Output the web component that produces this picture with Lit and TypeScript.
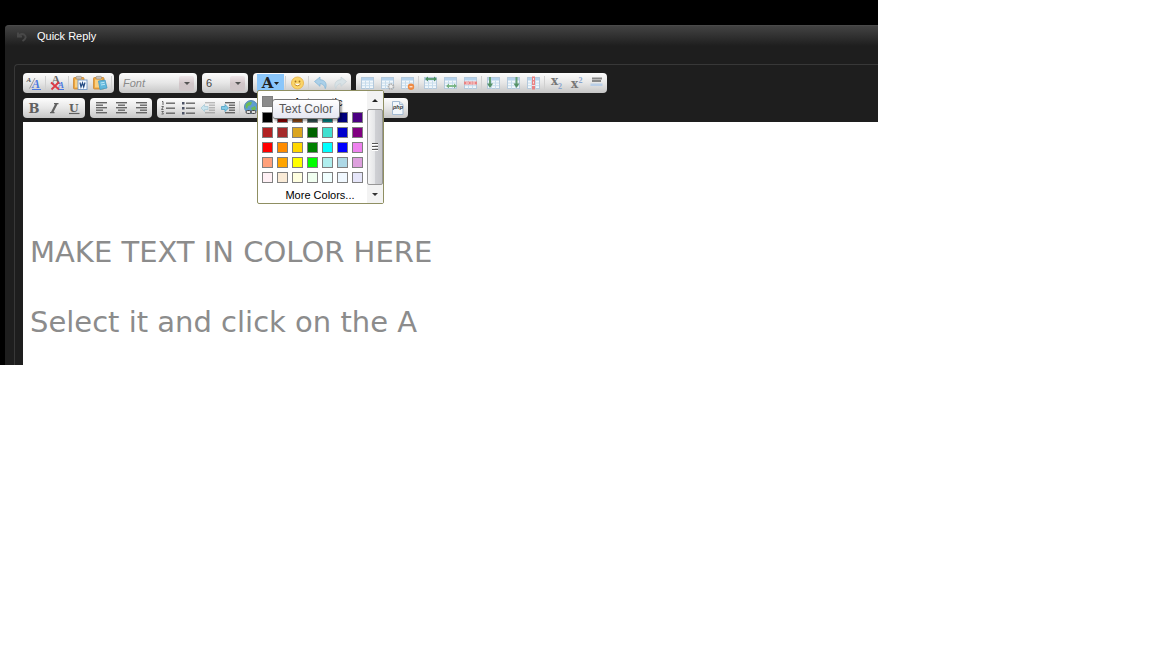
import { LitElement, html, css, svg, TemplateResult } from "lit";
import { customElement, property, state } from "lit/decorators.js";

const lines = (rows: number[][]) =>
  svg`${rows.map(([x, y, w]) => svg`<rect x=${x} y=${y} width=${w} height="1.4" fill="#666"/>`)}`;

const grid = svg`
  <rect x="2.5" y="2.5" width="12" height="11" fill="#f2f7fb" stroke="#b4c9dc"/>
  <path d="M3 3h11v2.500H3z" fill="#b5d2ec"/>
  <path d="M3 8h11M3 10.700h11M6.500 5.500v8M10.500 5.500v8" stroke="#c6dcec" fill="none"/>`;

const clipboard = svg`
  <rect x="1.500" y="2.500" width="10.500" height="11.500" rx="1" fill="#eda53c" stroke="#c98532" stroke-width=".8"/>
  <path d="M3 4.500h7v8H3z" fill="#f8cf83"/>
  <rect x="4" y="1.300" width="5.500" height="2.800" rx="1" fill="#c9c2ba" stroke="#8d857c" stroke-width=".6"/>`;

const glyph = (x: number, y: number, size: number, fill: string, text: string, style = "normal", family = "Liberation Serif") =>
  svg`<text x=${x} y=${y} font-size=${size} fill=${fill} font-weight="bold" font-style=${style} font-family=${family + ", serif"}>${text}</text>`;

const icons: Record<string, TemplateResult> = {
  style: svg`${glyph(0.5, 7, 7, "#555", "A", "italic")}<path d="M3.500 13.500L9 3" stroke="#888" stroke-width=".8"/>${glyph(6, 12.500, 12, "#4a78e0", "A", "italic")}<path d="M6 14.500h9" stroke="#4a78e0"/>`,
  unstyle: svg`${glyph(2.500, 9, 12, "#666", "A")}${glyph(9, 12.500, 9, "#4a78e0", "A", "italic")}<path d="M9 14.500h6" stroke="#4a78e0"/><path d="M2 7.500l8 7M10 7l-7.500 7.500" stroke="#dd3b45" stroke-width="1.800"/>`,
  pasteWord: svg`${clipboard}<rect x="6" y="5" width="9" height="9.500" fill="#f4f9ff" stroke="#7297c5" stroke-width=".9"/><path d="M8 7.500l1 4.500 1.500-4 1.200 4L13 7.500" fill="none" stroke="#234a83" stroke-width="1.200"/>`,
  paste: svg`${clipboard}<path d="M6.500 6l6.500-1 2 8-7 1.500z" fill="#62b8dc" stroke="#4598c0" stroke-width=".8"/><path d="M8.500 8l4-.7M9 10l4-.7" stroke="#bce7f6"/>`,
  smile: svg`<circle cx="8.500" cy="8" r="6" fill="#fbd567" stroke="#eab955"/><circle cx="6.500" cy="6.500" r=".9" fill="#a67420"/><circle cx="10.500" cy="6.500" r=".9" fill="#a67420"/><path d="M5.300 8.800q3.200 4 6.400 0" fill="#fff" stroke="#c08a35"/>`,
  undo: svg`<path d="M2.500 6.500L8 2v2.700c5 .2 7.500 3.800 5.300 9C12.500 10.300 11 8.700 8 8.700v2.600z" fill="#abd0e9" stroke="#80b3d6" stroke-width=".7"/>`,
  redo: svg`<path d="M14.500 6.500L9 2v2.700c-5 .2-7.500 3.800-5.300 9C4.500 10.300 6 8.700 9 8.700v2.600z" fill="#d8e2e6" stroke="#c3d0d6" stroke-width=".7"/>`,
  table: grid,
  tableProps: svg`${grid}<circle cx="12" cy="11.500" r="2.500" fill="#eee" stroke="#aaa" stroke-width="1.700" stroke-dasharray="1.500 .7"/>`,
  tableDelete: svg`${grid}<circle cx="12" cy="11.800" r="3.200" fill="#ee8b45"/><path d="M10.500 11.800h3" stroke="#fff"/>`,
  rowAbove: svg`${grid}<path d="M5 4h8" stroke="#63a077" stroke-width="2"/><path d="M6 1.500L3 4l3 2.500zM12 1.500l3 2.500-3 2.500z" fill="#4f9165"/>`,
  rowBelow: svg`${grid}<path d="M5 11h8" stroke="#82bd8e" stroke-width="2"/><path d="M7 8.500L4 11l3 2.500zM12 8.500l3 2.500-3 2.500z" fill="#76b081"/>`,
  rowDelete: svg`${grid}<path d="M2 8h13" stroke="#e98383" stroke-width="3"/><path d="M4 8h3M8.500 8h2M12 6.500v3" stroke="#fbe0e0"/>`,
  colLeft: svg`${grid}<path d="M5 2v8" stroke="#66a176" stroke-width="2"/><path d="M2 8.500h6L5 13z" fill="#559168"/>`,
  colRight: svg`${grid}<path d="M11.500 2v8" stroke="#66a176" stroke-width="2"/><path d="M8.500 8.500h6l-3 4.500z" fill="#559168"/>`,
  colDelete: svg`${grid}<path d="M8.500 1.500v13" stroke="#e98383" stroke-width="3"/><path d="M8.500 3v2M8.500 6.500v2M7 10.500h3" stroke="#fbe0e0"/>`,
  sub: svg`${glyph(3, 10, 12, "#777", "x", "normal", "DejaVu Serif")}${glyph(10, 13.500, 8, "#8ba6cf", "2")}`,
  sup: svg`${glyph(3, 13, 12, "#777", "x", "normal", "DejaVu Serif")}${glyph(10.500, 7.500, 8, "#8ba6cf", "2")}`,
  rule: svg`<path d="M4 3.500h10M4 6h9" stroke="#888" stroke-width="1.800"/><path d="M2.500 8.500h12V11h-12z" fill="#b9cee7"/>`,
  bold: glyph(2.500, 13, 13, "#606060", "B", "normal", "DejaVu Serif"),
  italic: svg`<path d="M8 3h4.500v1.200h-1L7.500 12h1v1.200H4V12h1L9 4.200H8z" fill="#606060"/>`,
  underline: svg`${glyph(3, 11.500, 11, "#606060", "U", "normal", "DejaVu Serif")}<path d="M3 13.500h10.500" stroke="#606060" stroke-width="1.200"/>`,
  left: lines([[3, 2, 11], [3, 4.5, 7], [3, 7, 11], [3, 9.500, 7], [3, 12, 11]]),
  center: lines([[3, 2, 11], [5, 4.5, 7], [3, 7, 11], [5, 9.500, 7], [3, 12, 11]]),
  right: lines([[3, 2, 11], [7, 4.5, 7], [3, 7, 11], [7, 9.500, 7], [3, 12, 11]]),
  ordered: svg`${lines([[6, 2.500, 9], [6, 7.500, 9], [6, 12.500, 9]])}<path d="M2 1.500h1V5M1.500 6.500h2l-2 3h2M1.500 11.500h2l-1 1.200 1 1.300h-2" fill="none" stroke="#666"/>`,
  bullets: svg`${lines([[6, 2.500, 9], [6, 7.500, 9], [6, 12.500, 9]])}<path d="M2 2h2.500v2.500H2zM2 7h2.500v2.500H2zM2 12h2.500v2.500H2z" fill="#4c5365"/>`,
  outdent: svg`<g opacity=".4">${lines([[5, 2, 10], [9, 4.500, 6], [9, 7, 6], [9, 9.500, 6], [5, 12, 10]])}</g><path d="M1 8l3.500-3.500v2H8v3H4.500v2z" fill="#c9e4ee" stroke="#a2c7d6" stroke-width=".7"/>`,
  indent: svg`${lines([[5, 2, 10], [9, 4.500, 6], [9, 7, 6], [9, 9.500, 6], [5, 12, 10]])}<path d="M8.500 8L5 4.500v2H1.500v3H5v2z" fill="#83cae6" stroke="#3c97bd" stroke-width=".7"/>`,
  link: svg`<circle cx="8" cy="7" r="6.500" fill="#5f9dd0" stroke="#407aa8" stroke-width=".8"/><path d="M3 4q3-3 6-2L8 5 5 6 4 9 2.500 7zM8 8l4-2 1 3-3 3z" fill="#6dbb55"/><rect x="3" y="10.500" width="5" height="3" rx="1.500" fill="#ddd" stroke="#444"/><rect x="8" y="10.500" width="5" height="3" rx="1.500" fill="#ddd" stroke="#444"/>`,
  blank: svg``,
  php: svg`<path d="M3.500 1.500h7l3.500 3v10H3.500z" fill="#f2f7fb" stroke="#a3bad2"/><path d="M10.500 1.500v3H14" fill="#dbe7f3" stroke="#a3bad2"/><text x="4" y="9" font-size="5.500" font-style="italic" font-weight="bold" fill="#333" font-family="Liberation Sans, sans-serif">php</text>`,
};

type Item = [string, string] | "|";

const groupsTop: Record<string, Item[]> = {
  clean: [["style", "Remove styles"], "|", ["unstyle", "Remove formatting"], "|", ["pasteWord", "Paste from Word"], ["paste", "Paste text"], "|"],
  insert: ["|", ["smile", "Insert smiley"], "|", ["undo", "Undo"], ["redo", "Redo"]],
  tables: [
    ["table", "Insert table"], ["tableProps", "Table properties"], ["tableDelete", "Delete table"], "|",
    ["rowAbove", "Insert row before"], ["rowBelow", "Insert row after"], ["rowDelete", "Delete row"], "|",
    ["colLeft", "Insert column before"], ["colRight", "Insert column after"], ["colDelete", "Delete column"], "|",
    ["sub", "Subscript"], ["sup", "Superscript"], ["rule", "Insert horizontal rule"],
  ],
};

const groupsBottom: Item[][] = [
  [["bold", "Bold"], ["italic", "Italic"], ["underline", "Underline"]],
  [["left", "Align left"], ["center", "Align center"], ["right", "Align right"]],
  [
    ["ordered", "Numbered list"], ["bullets", "Bulleted list"], ["outdent", "Decrease indent"], ["indent", "Increase indent"], "|",
    ["link", "Insert link"], ["blank", "Remove link"], "|", ["blank", "Insert email"], ["blank", "Insert image"], ["blank", "Insert video"], "|",
    ["blank", "Wrap quote"], ["blank", "Wrap code"], ["php", "Wrap PHP"],
  ],
];

const palette = [
  "#000000", "#8b0000", "#8b4513", "#2f4f4f", "#008080", "#000080", "#4b0082",
  "#b22222", "#a52a2a", "#daa520", "#006400", "#40e0d0", "#0000cd", "#800080",
  "#ff0000", "#ff8c00", "#ffd700", "#008000", "#00ffff", "#0000ff", "#ee82ee",
  "#ffa07a", "#ffa500", "#ffff00", "#00ff00", "#afeeee", "#add8e6", "#dda0dd",
  "#fff0f5", "#faebd7", "#ffffe0", "#f0fff0", "#f0ffff", "#f0f8ff", "#e6e6fa",
];

@customElement("color-menu")
export class ColorMenu extends LitElement {
  static styles = css`
    :host {
      display: flex;
      background: #fff;
      border: 1px solid #8f8f62;
      border-radius: 2px;
      font: 11px/14px "Liberation Sans", sans-serif;
      color: #000;
    }
    button { font: inherit; color: inherit; padding: 0; margin: 0; border: 0; background: none; cursor: pointer; }
    .main { display: flex; flex-direction: column; padding: 4px 4px 1px; gap: 4px; }
    .auto { display: flex; align-items: center; height: 13px; }
    .auto-label { flex: 1; text-align: center; }
    .chip { width: 11px; height: 11px; box-sizing: border-box; border: 1px solid #808080; background: #8c8c8c; }
    .grid { display: grid; grid-template-columns: repeat(7, 11px); gap: 4px; }
    .more { height: 15px; padding-left: 15px; }
    .bar { width: 16px; display: flex; flex-direction: column; background: #f3f3f3; margin-left: auto; }
    .arrow { height: 18px; display: grid; place-items: center; }
    .thumb {
      flex: 1;
      display: grid;
      place-items: center;
      box-sizing: border-box;
      border: 1px solid #979797;
      border-radius: 2px;
      background: linear-gradient(90deg, #f6f6f6, #e4e5e7 50%, #cfd0d4 52%, #c5c6ca);
    }
  `;
  render() {
    return html`
      <div class="main">
        <button class="auto"><span class="chip"></span><span class="auto-label">Automatic</span></button>
        <div class="grid">
          ${palette.map((c) => html`<button class="chip" aria-label=${c} style="background:${c}"></button>`)}
        </div>
        <button class="more">More Colors...</button>
      </div>
      <div class="bar">
        <button class="arrow" aria-label="Scroll up"><svg width="6" height="3"><path d="M0 3l3-3 3 3z" fill="#222"/></svg></button>
        <div class="thumb"><svg width="8" height="8"><path d="M1 .5h6M1 3.500h6M1 6.500h6" stroke="#555"/><path d="M1 1.500h6M1 4.500h6M1 7.500h6" stroke="#fff"/></svg></div>
        <button class="arrow" aria-label="Scroll down"><svg width="6" height="3"><path d="M0 0l3 3 3-3z" fill="#333"/></svg></button>
      </div>`;
  }
}

@customElement("tool-group")
export class ToolGroup extends LitElement {
  @property({ attribute: false }) items: Item[] = [];
  static styles = css`
    :host {
      display: flex;
      align-items: center;
      height: 20px;
      padding: 0 1px;
      border-radius: 4px;
      background: linear-gradient(#fdfdfd, #e6e6e6 50%, #c6c6c6);
    }
    .tool { width: 20px; height: 20px; padding: 0 2px; border: 0; background: none; display: grid; place-items: center; cursor: pointer; }
    .sep { width: 1px; height: 14px; margin: 0 1px; background: #d0d0d0; }
  `;
  render() {
    return html`<slot></slot>${this.items.map((item) =>
      item === "|"
        ? html`<span class="sep"></span>`
        : html`<button class="tool" aria-label=${item[1]}><svg width="16" height="16" viewBox="0 0 16 16">${icons[item[0]]}</svg></button>`
    )}`;
  }
}

@customElement("app-root")
export class AppRoot extends LitElement {
  @state() private open = true;

  static styles = css`
    :host { display: block; min-height: 100vh; background: #fff; }
    .page { max-width: 878px; box-sizing: border-box; padding: 25px 0 0 5px; background: #000; }
    .panel { background: #1e1e1e; border-radius: 4px 0 0 0; }
    .head {
      display: flex;
      align-items: center;
      gap: 8px;
      height: 20px;
      padding-left: 10px;
      border-top: 1px solid #4a4a4a;
      border-radius: 4px 0 0 0;
      background: linear-gradient(#434343, #1e1e1e);
    }
    .title { margin: 0; font: 11px/16px "Liberation Sans", sans-serif; color: #fff; }
    .body { padding: 18px 0 0 9px; }
    .frame { border: solid #383838; border-width: 1px 0 0 1px; border-radius: 4px 0 0 0; padding: 8px 0 0 8px; }
    .rows { display: flex; flex-direction: column; gap: 5px; padding-bottom: 4px; }
    .row { display: flex; gap: 5px; }
    .combo {
      display: flex;
      align-items: center;
      box-sizing: border-box;
      height: 20px;
      padding: 0 3px;
      border-radius: 4px;
      background: linear-gradient(#fdfdfd, #e6e6e6 50%, #c6c6c6);
    }
    .font { width: 78px; }
    .size { width: 46px; }
    .select {
      appearance: none;
      flex: 1;
      min-width: 0;
      border: 0;
      padding: 0 1px;
      background: none;
      font: 11px/16px "Liberation Sans", sans-serif;
      color: #444;
    }
    .hint { font-style: italic; color: #8a8a8a; }
    .drop {
      width: 15px;
      height: 15px;
      display: grid;
      place-items: center;
      border-radius: 2px;
      background: linear-gradient(#efe6e9, #d2c6c9 50%, #cfc6c8);
      pointer-events: none;
    }
    .color { position: relative; margin-left: 3px; }
    .color-button {
      display: flex;
      align-items: center;
      justify-content: center;
      gap: 1px;
      width: 27px;
      height: 18px;
      padding: 0;
      border: 0;
      background: #8ac6fa;
      color: #222;
      font: bold 15px/18px "DejaVu Serif", serif;
    }
    .menu { position: absolute; z-index: 1; left: 0; top: 16px; width: 125px; }
    .tip {
      position: absolute;
      z-index: 2;
      left: 15px;
      top: 25px;
      padding: 1px 6px;
      border: 1px solid #767676;
      border-radius: 3px;
      background: linear-gradient(#fff, #e5e6f1);
      box-shadow: 2px 2px 2px rgba(0, 0, 0, 0.35);
      color: #575757;
      font: 12px/16px "Noto Sans", sans-serif;
      font-family: "Liberation Sans", sans-serif;
      white-space: nowrap;
    }
    .editor {
      display: block;
      width: 100%;
      box-sizing: border-box;
      margin: 0;
      padding: 113px 7px 25px;
      border: 0;
      outline: 0;
      resize: none;
      overflow: hidden;
      background: #fff;
      color: #8c8c8c;
      font: 29px/35px Verdana, "DejaVu Sans", sans-serif;
    }
  `;

  render() {
    const arrow = html`<span class="drop"><svg width="6" height="3"><path d="M0 0h6L3 3z" fill="#555"/></svg></span>`;
    return html`
      <main class="page">
        <section class="panel">
          <header class="head">
            <svg width="14" height="14" viewBox="0 0 14 14"><path d="M3 3.500v4h4M3.500 7Q6 4 9 5.500q4 3-1.500 6.500" fill="none" stroke="#484848" stroke-width="2"/></svg>
            <h2 class="title">Quick Reply</h2>
          </header>
          <div class="body">
            <div class="frame">
              <div class="rows">
                <div class="row">
                  <tool-group .items=${groupsTop.clean}></tool-group>
                  <label class="combo font"><select class="select hint" aria-label="Font"><option>Font</option></select>${arrow}</label>
                  <label class="combo size"><select class="select" aria-label="Size"><option>6</option></select>${arrow}</label>
                  <tool-group .items=${groupsTop.insert}>
                    <div class="color">
                      <button class="color-button" aria-label="Text Color" @click=${() => (this.open = !this.open)}>
                        A<svg width="5" height="3"><path d="M0 0h5L2.500 3z" fill="#222"/></svg>
                      </button>
                      ${this.open ? html`<color-menu class="menu"></color-menu><span class="tip" role="tooltip">Text Color</span>` : ""}
                    </div>
                  </tool-group>
                  <tool-group .items=${groupsTop.tables}></tool-group>
                </div>
                <div class="row">${groupsBottom.map((g) => html`<tool-group .items=${g}></tool-group>`)}</div>
              </div>
              <textarea class="editor" rows="3" spellcheck="false" aria-label="Message" .value=${"MAKE TEXT IN COLOR HERE\n\nSelect it and click on the A"}></textarea>
            </div>
          </div>
        </section>
      </main>`;
  }
}
